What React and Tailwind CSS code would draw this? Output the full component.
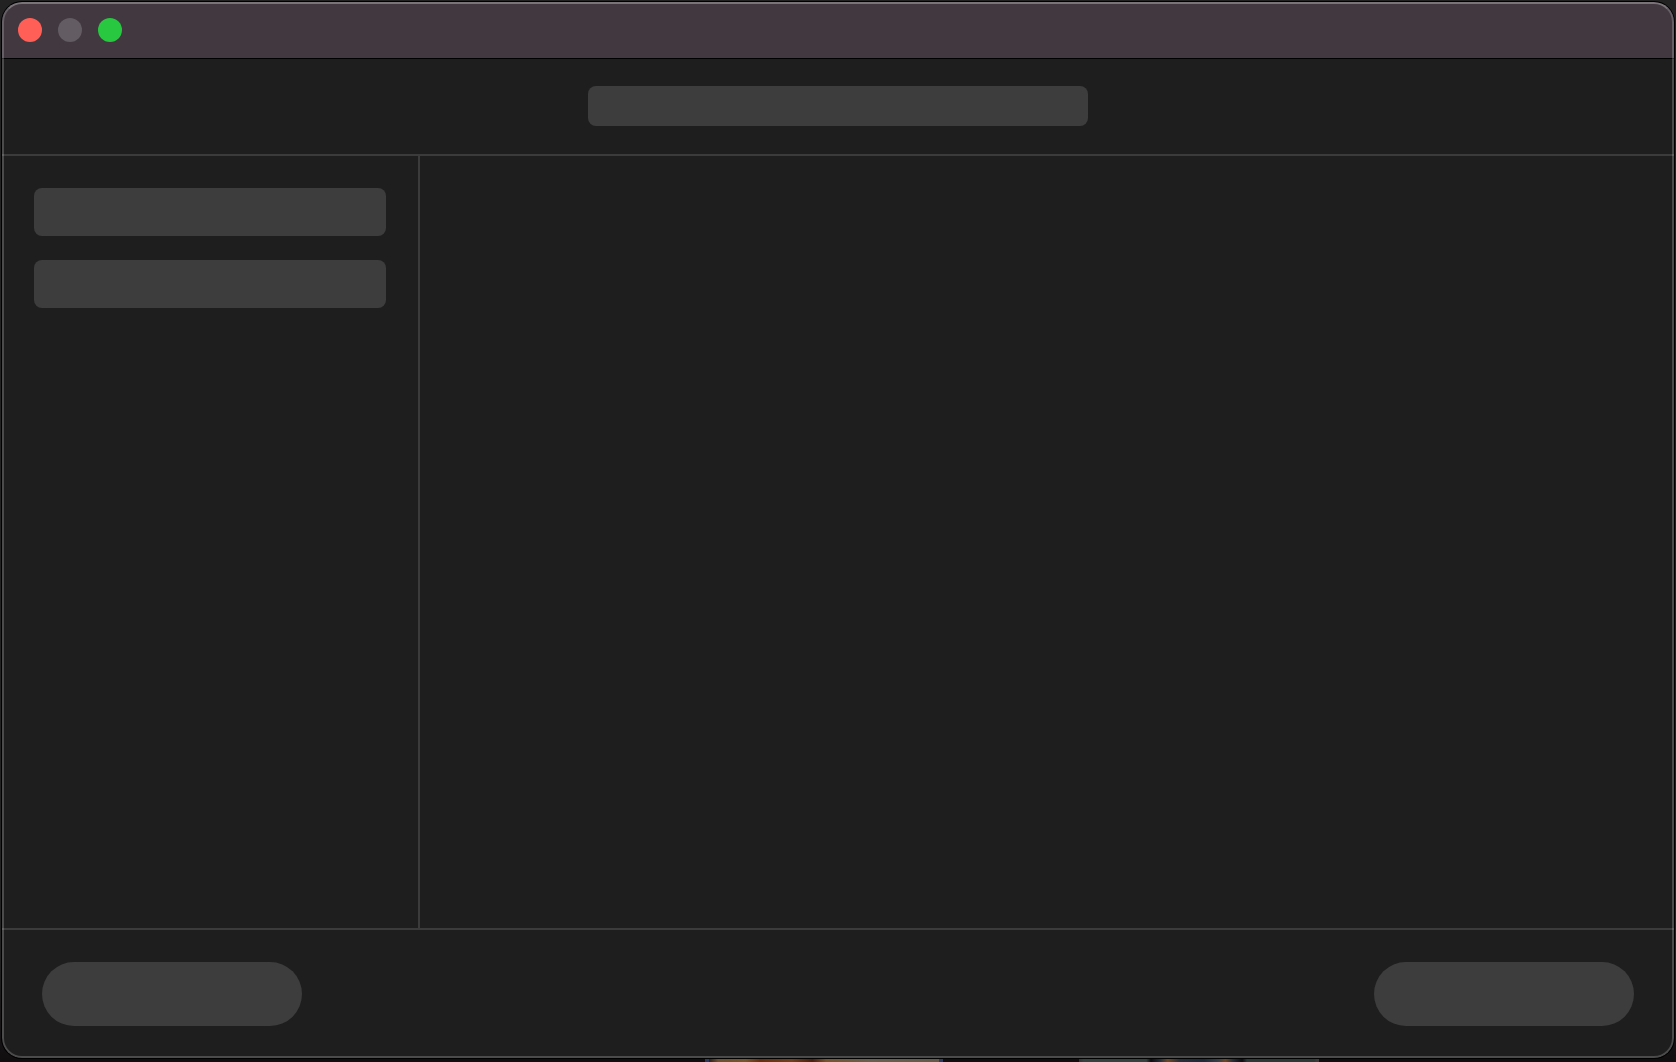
import React from 'react'

const sidebarItems = ['First item', 'Second item']

function TitleBar() {
  return (
    <header className="flex h-14 shrink-0 items-center gap-4 bg-[#413840] px-4">
      <button type="button" aria-label="Close" className="size-6 rounded-full bg-[#ff5f57]" />
      <button
        type="button"
        aria-label="Minimize"
        disabled
        className="size-6 rounded-full bg-[#635c63]"
      />
      <button type="button" aria-label="Zoom" className="size-6 rounded-full bg-[#28c840]" />
    </header>
  )
}

function Toolbar() {
  return (
    <div className="flex shrink-0 justify-center border-b-2 border-[#3b3b3b] py-7 shadow-[inset_0_1px_0_#000]">
      <input
        type="search"
        aria-label="Search"
        className="h-10 w-[500px] rounded-lg bg-[#3d3d3d] px-3 text-base text-gray-200 outline-none"
      />
    </div>
  )
}

function Sidebar() {
  return (
    <nav className="w-[418px] shrink-0 border-r-2 border-[#3b3b3b] p-8">
      <ul className="flex flex-col gap-6">
        {sidebarItems.map((item) => (
          <li key={item} className="flex">
            <button type="button" aria-label={item} className="h-12 flex-1 rounded-lg bg-[#3d3d3d]" />
          </li>
        ))}
      </ul>
    </nav>
  )
}

function Footer() {
  return (
    <footer className="flex shrink-0 justify-between border-t-2 border-[#3b3b3b] px-10 py-8">
      <button type="button" aria-label="Back" className="h-16 w-[260px] rounded-full bg-[#3d3d3d]" />
      <button type="button" aria-label="Next" className="h-16 w-[260px] rounded-full bg-[#3d3d3d]" />
    </footer>
  )
}

// Sliver of the desktop that shows under the window
function DesktopStrip() {
  return (
    <div className="flex h-1 shrink-0 bg-[#110e10]" aria-hidden="true">
      <div className="ml-[703px] w-[238px] border-x-4 border-[#2c3b60] bg-[linear-gradient(90deg,#2b2018_0%,#6b5230_4%,#77562b_16%,#66300f_22%,#71411c_36%,#4a200e_45%,#77562f_51%,#68604e_70%,#625b4a_100%)]" />
      <div className="ml-[136px] w-[240px] bg-[linear-gradient(90deg,#303434_0%,#334440_2%,#334440_28%,#0a0d10_30%,#25313a_34%,#6b4a24_37%,#25313a_42%,#1b2b3b_52%,#334148_58%,#6b4a24_61%,#25313a_64%,#0a0d10_68%,#293a37_70%,#293a37_98%,#3c3c3c_99%)]" />
    </div>
  )
}

export default function App() {
  return (
    <div className="flex h-screen flex-col overflow-hidden bg-[linear-gradient(180deg,#222222_0%,#222222_90%,#110e10_100%)] px-[2px] pt-[2px] font-['Liberation_Sans',sans-serif]">
      <div className="relative z-10 flex min-h-0 flex-1 flex-col overflow-hidden rounded-[20px] bg-[#1e1e1e] shadow-[0_0_0_1px_#000]">
        <TitleBar />
        <Toolbar />
        <div className="flex min-h-0 flex-1">
          <Sidebar />
          <main className="flex-1" />
        </div>
        <Footer />
        {/* light rim around the window edge */}
        <div className="pointer-events-none absolute inset-0 rounded-[20px] border-2 border-white/20 border-t-white/30" />
      </div>
      <DesktopStrip />
    </div>
  )
}
